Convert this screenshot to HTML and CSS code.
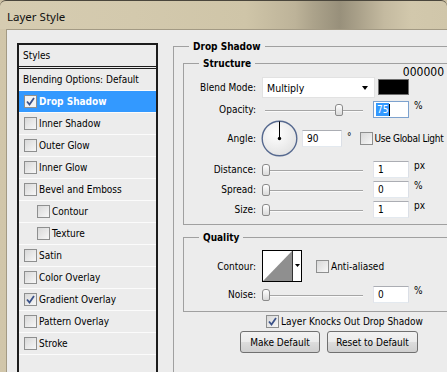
FILE: index.html
```html
<!DOCTYPE html>
<html lang="en">
<head>
  <meta charset="UTF-8" />
  <title>Layer Style</title>
  <link rel="stylesheet" href="styles.css">
</head>
<body>
  <div class="window">
    <div class="titlebar"><span class="title">Layer Style</span></div>
    <div class="frame">
      <div class="client">

        <div class="styles-panel">
          <div class="styles-head">Styles</div>
          <div class="style-row">Blending Options: Default</div>
          <div class="style-row selected"><span class="cb"><svg width="11" height="11" viewBox="0 0 11 11"><path d="M2 5.5 L4.5 8.5 L9 2" /></svg></span>Drop Shadow</div>
          <div class="style-row"><span class="cb"></span>Inner Shadow</div>
          <div class="style-row"><span class="cb"></span>Outer Glow</div>
          <div class="style-row"><span class="cb"></span>Inner Glow</div>
          <div class="style-row"><span class="cb"></span>Bevel and Emboss</div>
          <div class="style-row sub"><span class="cb"></span>Contour</div>
          <div class="style-row sub"><span class="cb"></span>Texture</div>
          <div class="style-row"><span class="cb"></span>Satin</div>
          <div class="style-row"><span class="cb"></span>Color Overlay</div>
          <div class="style-row"><span class="cb"><svg width="11" height="11" viewBox="0 0 11 11"><path d="M2 5.5 L4.5 8.5 L9 2" /></svg></span>Gradient Overlay</div>
          <div class="style-row"><span class="cb"></span>Pattern Overlay</div>
          <div class="style-row"><span class="cb"></span>Stroke</div>
        </div>

        <div class="options">
          <fieldset class="group outer">
            <legend>Drop Shadow</legend>

            <fieldset class="group inner structure">
              <legend>Structure</legend>

              <div class="row row-blend">
                <span class="lbl">Blend Mode:</span>
                <div class="select"><span>Multiply</span><i class="caret"></i></div>
                <div class="swatch-col"><span class="hex">000000</span><span class="swatch"></span></div>
              </div>

              <div class="row row-first">
                <span class="lbl">Opacity:</span>
                <div class="slider"><span class="thumb" style="left: 73px"></span></div>
                <div class="num focus"><span class="sel">75</span><span class="caret-line"></span></div>
                <span class="unit">%</span>
              </div>

              <div class="row row-angle">
                <span class="lbl">Angle:</span>
                <svg class="dial" width="37" height="37" viewBox="0 0 37 37">
                  <defs>
                    <radialGradient id="dialfill" cx="40%" cy="35%" r="70%">
                      <stop offset="0" stop-color="#ffffff" />
                      <stop offset="1" stop-color="#e2e2e2" />
                    </radialGradient>
                  </defs>
                  <circle cx="18.5" cy="18.5" r="17.3" fill="url(#dialfill)" stroke="#56698f" stroke-width="1.4" />
                  <line x1="18.5" y1="18.5" x2="18.5" y2="1.5" stroke="#000" stroke-width="1" />
                  <circle cx="18.5" cy="18.5" r="1.7" fill="#000" />
                </svg>
                <div class="num wide">90</div>
                <span class="deg">°</span>
                <label class="check global"><span class="cb"></span>Use Global Light</label>
              </div>

              <div class="row row-dist">
                <span class="lbl">Distance:</span>
                <div class="slider"><span class="thumb" style="left: 0px"></span></div>
                <div class="num">1</div>
                <span class="unit">px</span>
              </div>

              <div class="row row-next">
                <span class="lbl">Spread:</span>
                <div class="slider"><span class="thumb" style="left: 0px"></span></div>
                <div class="num">0</div>
                <span class="unit">%</span>
              </div>

              <div class="row row-next">
                <span class="lbl">Size:</span>
                <div class="slider"><span class="thumb" style="left: 0px"></span></div>
                <div class="num">1</div>
                <span class="unit">px</span>
              </div>
            </fieldset>

            <fieldset class="group inner quality">
              <legend>Quality</legend>

              <div class="row row-contour">
                <span class="lbl">Contour:</span>
                <svg class="contour" width="40" height="32" viewBox="0 0 40 32">
                  <rect x="0.5" y="0.5" width="39" height="31" fill="#fff" stroke="#000" />
                  <polygon points="1,31 30,1 30,31" fill="#8f8f8f" />
                  <line x1="30.5" y1="1" x2="30.5" y2="31" stroke="#333" />
                  <polygon points="33,14 38,14 35.5,17" fill="#000" />
                </svg>
                <label class="check anti"><span class="cb"></span>Anti-aliased</label>
              </div>

              <div class="row row-noise">
                <span class="lbl">Noise:</span>
                <div class="slider"><span class="thumb" style="left: 0px"></span></div>
                <div class="num">0</div>
                <span class="unit">%</span>
              </div>
            </fieldset>

            <label class="check knock"><span class="cb"><svg width="11" height="11" viewBox="0 0 11 11"><path d="M2 5.5 L4.5 8.5 L9 2" /></svg></span>Layer Knocks Out Drop Shadow</label>

            <div class="buttons">
              <button class="btn make">Make Default</button>
              <button class="btn reset">Reset to Default</button>
            </div>
          </fieldset>
        </div>

      </div>
    </div>
  </div>
</body>
</html>
```

FILE: styles.css
```css
html, body {
  margin: 0;
  padding: 0;
  overflow: hidden;
}

body {
  width: 447px;
  height: 372px;
  font-family: "DejaVu Sans Condensed", "DejaVu Sans", sans-serif;
  font-size: 10px;
  color: #000;
  background: #cbbfa2;
}

.window {
  width: 447px;
  height: 372px;
  display: flex;
  flex-direction: column;
  overflow: hidden;
}

/* window chrome */
.titlebar {
  height: 29px;
  flex: none;
  box-sizing: border-box;
  padding: 2px 0 0 7px;
  display: flex;
  align-items: center;
  border-top: 1px solid #4a463c;
  border-radius: 6px 6px 0 0;
  background: linear-gradient(90deg, #d6ccb1 0%, #d3c9ad 30%, #cfc5a8 55%, #bdb399 66%, #aca38b 70%, #98907b 76%, #a9a089 80%, #c4baa0 86%, #d2c8ac 92%, #d0c6aa 100%);
}

.title {
  font-family: "Noto Sans", sans-serif;
  font-size: 11.5px;
  color: #111;
}

.frame {
  flex: 1;
  display: flex;
  padding-left: 6px;
  background: linear-gradient(90deg, #d1c6aa, #bcb196);
}

.client {
  flex: 1;
  display: flex;
  align-items: flex-start;
  padding: 13px 0 0 10px;
  background: #ececec;
  border-top: 1px solid #a39a84;
  border-left: 1px solid #a39a84;
}

/* styles list */
.styles-panel {
  flex: none;
  align-self: stretch;
  width: 141px;
  box-sizing: border-box;
  border: 2px solid #1c1c1c;
  border-bottom: none;
}

.styles-head {
  height: 21px;
  line-height: 21px;
  padding-left: 4px;
  border-bottom: 3px double #1c1c1c;
}

.style-row {
  height: 22px;
  box-sizing: border-box;
  display: flex;
  align-items: center;
  gap: 2px;
  padding-left: 4px;
  border-bottom: 1px solid #fbfbfb;
}

.style-row .cb {
  margin-left: 1px;
}

.style-row.sub {
  padding-left: 17px;
}

.style-row.selected {
  background: #3399ff;
  color: #fff;
  font-weight: bold;
}

.selected .cb {
  background: #f4f4f4;
}

/* checkbox */
.cb {
  width: 13px;
  height: 13px;
  flex: none;
  box-sizing: border-box;
  border: 1px solid #8e8f8f;
  background: linear-gradient(135deg, #d8d8d8, #f7f7f7);
  display: inline-flex;
  align-items: center;
  justify-content: center;
}

.cb path {
  fill: none;
  stroke: #3b5289;
  stroke-width: 1.8;
}

.check {
  display: flex;
  align-items: center;
  gap: 2px;
  white-space: nowrap;
}

/* right side */
.options {
  flex: none;
  width: 300px;
  margin: -3px 0 0 15px;
}

.group {
  margin: 0;
  padding: 0;
  min-width: 0;
  border: 1px solid #a0a0a0;
}

.group > legend {
  margin-left: 15px;
  padding: 0 4px;
  line-height: 13px;
  font-weight: bold;
}

.outer {
  padding-bottom: 40px;
}

.inner {
  margin-left: 9px;
}

.structure {
  margin-top: 4px;
  padding-bottom: 6px;
}

.quality {
  margin-top: 6px;
  padding-bottom: 8px;
}

.row {
  display: flex;
  align-items: center;
  height: 17px;
  white-space: nowrap;
}

.row > * {
  flex: none;
}

.lbl {
  width: 72px;
  text-align: right;
}

.row-blend {
  margin-top: 7px;
  height: 21px;
}

.row-first {
  margin-top: 3px;
}

.row-angle {
  margin-top: 2px;
  height: 37px;
}

.row-dist {
  margin-top: 4px;
}

.row-next {
  margin-top: 3px;
}

.row-contour {
  margin-top: 6px;
  height: 32px;
}

.row-noise {
  margin-top: 4px;
}

/* controls */
.select {
  width: 113px;
  height: 21px;
  margin-left: 6px;
  box-sizing: border-box;
  display: flex;
  align-items: center;
  padding-left: 4px;
  background: #fff;
  border: 1px solid #e2e2e2;
  font-size: 10.5px;
}

.caret {
  margin: 1px 6px 0 auto;
  width: 0;
  height: 0;
  border-left: 3.5px solid transparent;
  border-right: 3.5px solid transparent;
  border-top: 4px solid #000;
}

.swatch-col {
  align-self: flex-end;
  width: 66px;
  margin: 0 0 3px 3px;
  display: flex;
  flex-direction: column;
  align-items: flex-start;
}

.hex {
  align-self: flex-end;
  font-size: 12px;
  line-height: 12px;
}

.swatch {
  width: 31px;
  height: 16px;
  margin-top: 1px;
  box-sizing: border-box;
  background: #000;
  border: 1px solid #6e6e6e;
}

.slider {
  position: relative;
  width: 101px;
  height: 12px;
  margin-left: 6px;
}

.slider::before {
  content: "";
  position: absolute;
  left: 3px;
  right: 0;
  top: 6px;
  height: 2px;
  box-sizing: border-box;
  border-top: 1px solid #a5a5a5;
  background: #fafafa;
}

.thumb {
  position: absolute;
  top: 0;
  width: 8px;
  height: 12px;
  box-sizing: border-box;
  border: 1px solid #8a8a8a;
  border-radius: 3px 3px 2px 2px;
  background: linear-gradient(#ffffff, #d9d9d9);
}

.num {
  width: 36px;
  height: 17px;
  margin-left: 10px;
  box-sizing: border-box;
  padding-left: 4px;
  line-height: 15px;
  background: #fff;
  border: 1px solid;
  border-color: #abadb3 #dbdfe6 #e3e9ef #e2e3ea;
  display: flex;
  align-items: center;
}

.num.focus {
  border-color: #7da2ce;
  padding-left: 2px;
}

.sel {
  background: #3399ff;
  color: #fff;
  line-height: 13px;
  padding: 0 1px;
}

.caret-line {
  width: 1px;
  height: 12px;
  background: #000;
}

.num.wide {
  width: 40px;
  margin-left: 4px;
}

.unit {
  margin-left: 5px;
  align-self: flex-start;
  line-height: 12px;
  margin-top: -1px;
}

.dial {
  margin-left: 5px;
}

.deg {
  margin-left: 5px;
  align-self: flex-start;
  margin-top: 11px;
}

.global {
  margin-left: 8px;
  letter-spacing: -0.3px;
}

.contour {
  margin-left: 6px;
}

.anti {
  margin-left: 14px;
}

.knock {
  margin: 3px 0 0 92px;
  height: 13px;
}

.buttons {
  display: flex;
  gap: 7px;
  margin: 3px 0 0 66px;
}

.btn {
  height: 22px;
  padding: 0;
  box-sizing: border-box;
  font: inherit;
  color: #000;
  border: 1px solid #707070;
  border-radius: 3px;
  background: linear-gradient(#f2f2f2 0%, #ebebeb 50%, #dddddd 51%, #cfcfcf 100%);
}

.make {
  width: 80px;
}

.reset {
  width: 91px;
}
```
